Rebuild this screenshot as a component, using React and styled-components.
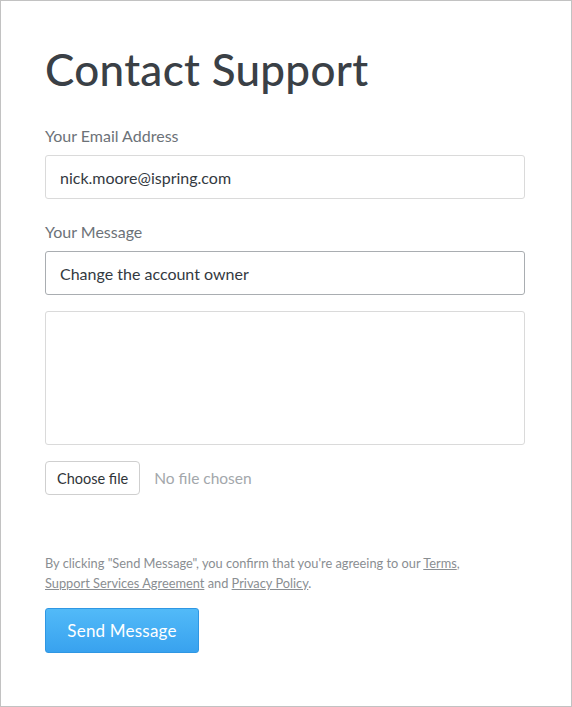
import React from 'react'
import styled, { createGlobalStyle } from 'styled-components'

const Global = createGlobalStyle`
  html, body {
    margin: 0;
    padding: 0;
    background: #fff;
  }
  * { box-sizing: border-box; }
`

const Frame = styled.div`
  width: 572px;
  height: 707px;
  border: 1px solid #c2c2c2;
  padding: 38px 46px 0 44px;
  font-family: Lato, "Open Sans", sans-serif;
  color: #3d4349;
`

const Title = styled.h1`
  margin: 0 0 27px;
  font-size: 44px;
  font-weight: 500;
  line-height: 60px;
  color: #3a4046;
  letter-spacing: 0.3px;
`

const Field = styled.div`
  display: flex;
  flex-direction: column;
  margin-bottom: ${p => p.gap || 0}px;
`

const Label = styled.label`
  font-size: 16px;
  line-height: 20px;
  color: #6c7278;
  margin-bottom: 9px;
`

const TextInput = styled.input`
  width: 480px;
  height: 44px;
  padding: 0 14px;
  border: 1px solid ${p => (p.active ? '#a9adb1' : '#dadada')};
  border-radius: 3px;
  font-family: inherit;
  font-size: 16px;
  color: #33393f;
  outline: none;
  background: #fff;
`

const TextArea = styled.textarea`
  width: 480px;
  height: 134px;
  border: 1px solid #dadada;
  border-radius: 3px;
  resize: none;
  outline: none;
  font-family: inherit;
  padding: 12px 14px;
`

const FileRow = styled.div`
  display: flex;
  align-items: center;
  gap: 14px;
  margin-top: 13px;
`

const FileButton = styled.button`
  height: 34px;
  padding: 0 11px;
  border: 1px solid #cfcfcf;
  border-radius: 4px;
  background: #fff;
  font-family: inherit;
  font-size: 14.5px;
  color: #2f3438;
`

const FileStatus = styled.span`
  font-size: 15.5px;
  color: #a3a7ab;
`

const Note = styled.p`
  margin: 58px 0 0;
  font-size: 12.8px;
  line-height: 20px;
  color: #8a8e92;

  a {
    color: #8a8e92;
    text-decoration: underline;
  }
`

const SendButton = styled.button`
  margin-top: 15px;
  width: 154px;
  height: 45px;
  border: 1px solid #2f97e3;
  border-radius: 3px;
  background: linear-gradient(#52baf8, #38a2ef);
  color: #fff;
  font-family: inherit;
  font-size: 17px;
  letter-spacing: 0.2px;
`

export default function App() {
  return (
    <>
      <Global />
      <Frame>
        <Title>Contact Support</Title>
        <Field gap={23}>
          <Label>Your Email Address</Label>
          <TextInput defaultValue="nick.moore@ispring.com" />
        </Field>
        <Field gap={16}>
          <Label>Your Message</Label>
          <TextInput active defaultValue="Change the account owner" />
        </Field>
        <TextArea />
        <FileRow>
          <FileButton>Choose file</FileButton>
          <FileStatus>No file chosen</FileStatus>
        </FileRow>
        <Note>
          By clicking "Send Message", you confirm that you're agreeing to our <a href="#">Terms</a>,
          <br />
          <a href="#">Support Services Agreement</a> and <a href="#">Privacy Policy</a>.
        </Note>
        <SendButton>Send Message</SendButton>
      </Frame>
    </>
  )
}
